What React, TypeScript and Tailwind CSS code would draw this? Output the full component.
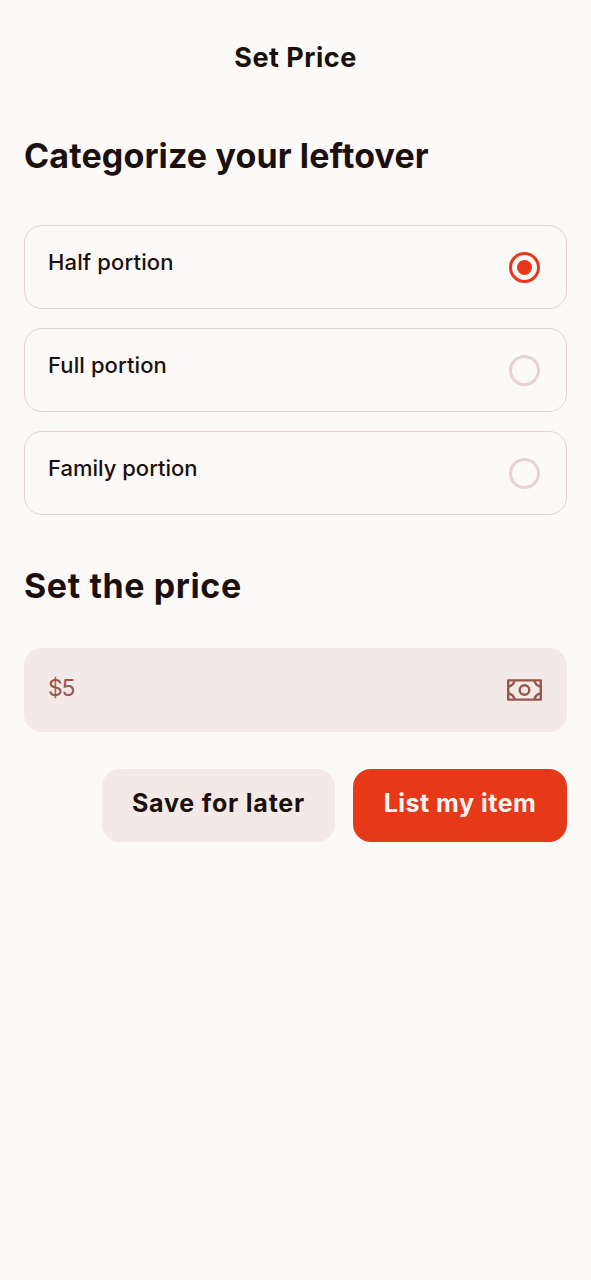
function Option({ label, tracking, selected }: { label: string; tracking: string; selected?: boolean }) {
  return (
    <label className="flex h-[84.5px] items-center justify-between rounded-[18px] border border-[#e8d0ce] pr-[26px] pl-[23px]">
      <span className={`-mt-[9px] text-[22px] leading-8 font-medium whitespace-nowrap ${tracking}`}>{label}</span>
      <span
        className={`mt-px flex size-[31px] items-center justify-center rounded-full border-[3px] ${
          selected ? "border-[#e63919]" : "border-[#e8d3d1]"
        }`}
      >
        {selected && <span className="size-[15px] rounded-full bg-[#e63919]" />}
      </span>
    </label>
  );
}

function MoneyIcon() {
  return (
    <svg className="-mt-px h-[22px] w-[35px]" viewBox="0 0 35 22" fill="none" stroke="#99564c" strokeWidth="2.4" strokeLinejoin="round">
      <rect x="1.2" y="1.4" width="32.6" height="19.2" />
      <circle cx="17.5" cy="11" r="4.8" />
      <path d="M7.6 1.5C7 4.5 4.5 7 1.2 7.6M27.4 1.5c.6 3 3.1 5.5 6.4 6.1M7.6 20.5C7 17.5 4.5 15 1.2 14.4M27.4 20.5c.6-3 3.1-5.5 6.4-6.1" />
    </svg>
  );
}

export default function App() {
  return (
    <main className="min-h-[1280px] bg-[#fcfaf8] px-6 pt-[38px] font-[Inter,sans-serif] text-[#1b100e]">
      <h1 className="text-center text-[27px] leading-10 font-bold tracking-[0.5px]">Set Price</h1>
      <h2 className="mt-[57px] text-[34px] leading-[42px] font-bold tracking-[0.13px] whitespace-nowrap">
        Categorize your leftover
      </h2>
      <div className="mt-[47.5px] flex flex-col gap-[18.5px]">
        <Option label="Half portion" tracking="tracking-[0.14px]" selected />
        <Option label="Full portion" tracking="tracking-[0.1px]" />
        <Option label="Family portion" tracking="tracking-[0px]" />
      </div>
      <h2 className="mt-[50px] text-[34px] leading-[42px] font-bold tracking-[0.6px] whitespace-nowrap">
        Set the price
      </h2>
      <div className="mt-[41px] flex h-[84px] items-center justify-between rounded-[18px] bg-[#f3e9e7] pr-[25px] pl-6">
        <span className="-mt-1 text-[23px] tracking-[-1.2px] text-[#99564c]">$5</span>
        <MoneyIcon />
      </div>
      <div className="mt-[37px] flex justify-end gap-[18px]">
        <button className="h-[73px] w-[233px] rounded-[18px] bg-[#f3e9e7] pb-1 text-[25px] font-bold tracking-[0.8px] whitespace-nowrap">
          Save for later
        </button>
        <button className="h-[73px] w-[214px] rounded-[18px] bg-[#e63919] pb-1 text-[25px] font-bold tracking-[0.5px] whitespace-nowrap text-[#fcf5f2]">
          List my item
        </button>
      </div>
    </main>
  );
}
